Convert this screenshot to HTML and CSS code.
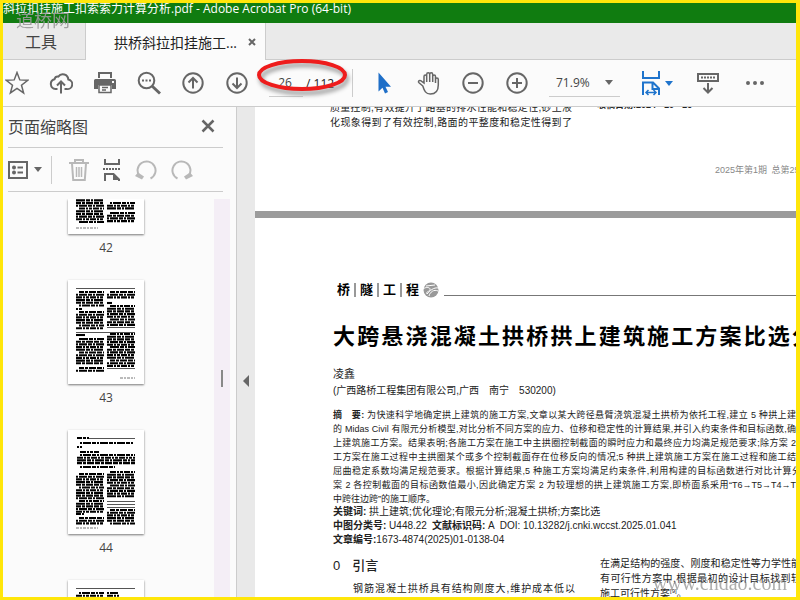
FILE: index.html
```html
<!DOCTYPE html>
<html lang="zh-CN">
<head>
    <meta charset="UTF-8">
    <meta name="viewport" content="width=device-width, initial-scale=1.0">
    <title>Adobe Acrobat Pro</title>
    <link rel="stylesheet" href="styles.css">
</head>
<body>
    <header class="titlebar">斜拉扣挂施工扣索索力计算分析.pdf - Adobe Acrobat Pro (64-bit)</header>
    <span class="stamp">道桥网</span>

    <nav class="tabs">
        <button class="tab tools">工具</button>
        <div class="tab active">
            <span>拱桥斜拉扣挂施工...</span>
            <button class="icon close" aria-label="关闭标签">
                <svg width="8" height="8" viewBox="0 0 8 8"><path d="M1 1l6 6M7 1L1 7" stroke-width="2"/></svg>
            </button>
        </div>
        <div class="tab-rest"></div>
    </nav>

    <div class="toolbar">
        <div class="group">
            <button class="icon" aria-label="收藏"><svg width="24" height="24" viewBox="0 0 24 24"><path d="M12 1.5l2.8 7.4 7.9.4-6.2 4.9 2.1 7.7-6.6-4.4-6.6 4.4 2.1-7.7L1.3 9.3l7.9-.4z"/></svg></button>
            <button class="icon" aria-label="上传"><svg width="24" height="24" viewBox="0 0 24 24"><path d="M8.500 18H6.500a5 5 0 0 1-1-9.800 3.500 3.500 0 0 1 3.800-2.600 5.500 5.500 0 0 1 10 2.900A4.800 4.800 0 0 1 17.500 18h-2M12 22.500V11M8 14.500l4-4 4 4" stroke-width="2"/></svg></button>
            <button class="icon" aria-label="打印"><svg width="24" height="24" viewBox="0 0 24 24"><path class="fill" d="M5 1h14v6H5zM2.500 8h19a1.500 1.500 0 0 1 1.500 1.500V18h-4v-4H5v4H1V9.500A1.500 1.500 0 0 1 2.500 8z"/><path class="paper" d="M7 3h10v4H7z"/><path d="M6 14h12v7.500H6zM9 16.500h6M9 19h4"/><path class="paper" d="M19 10h2v2h-2z"/></svg></button>
            <button class="icon" aria-label="查找"><svg width="24" height="24" viewBox="0 0 24 24"><circle cx="9.500" cy="9.500" r="7.800" stroke-width="2"/><path d="M15 15l8 7.500" stroke-width="3"/><path class="fill" d="M5 8.500h2v2H5zM8.500 8.500h2v2h-2zM12 8.500h2v2h-2z"/></svg></button>
            <button class="icon" aria-label="上一页"><svg width="24" height="24" viewBox="0 0 24 24"><circle cx="12" cy="12" r="9.700" stroke-width="2"/><path d="M12 17.500V8M7.500 11.500L12 7l4.500 4.500" stroke-width="2"/></svg></button>
            <button class="icon" aria-label="下一页"><svg width="24" height="24" viewBox="0 0 24 24"><circle cx="12" cy="12" r="9.700" stroke-width="2"/><path d="M12 6.500V16M7.500 12.500L12 17l4.500-4.500" stroke-width="2"/></svg></button>
        </div>
        <div class="pager">
            <input type="text" value="26" aria-label="页码">
            <span>/ 112</span>
            <svg class="mark" width="96" height="40" viewBox="0 0 96 40"><ellipse cx="47" cy="18" rx="43" ry="14" stroke-width="4"/></svg>
        </div>
        <div class="group view">
            <button class="icon" aria-label="选择"><svg width="24" height="24" viewBox="0 0 24 24"><path class="blue-fill" d="M5.500 1.500v19l4-3.700 2.500 5.700 3-1.400-2.500-5.300H18z"/></svg></button>
            <button class="icon" aria-label="手形工具"><svg width="24" height="24" viewBox="0 0 24 24"><path d="M5.800 15L2 11.800C.7 10.500 2 8.800 3.700 9.700L7 12V5.500c0-2 2.700-2 2.700 0V11 3.500c0-2.300 3-2.300 3 0V11 3.500c0-2.200 3-2.200 3 0V11 5.500c0-2 2.800-2 2.800 0V12 8.500c0-2 2.800-2 2.800 0V14c0 6-3 9-8 9-4.500 0-6-3-7.500-8z" stroke-width="1.500"/></svg></button>
            <button class="icon" aria-label="缩小"><svg width="24" height="24" viewBox="0 0 24 24"><circle cx="12" cy="12" r="9.700" stroke-width="2"/><path d="M7 12h10" stroke-width="2"/></svg></button>
            <button class="icon" aria-label="放大"><svg width="24" height="24" viewBox="0 0 24 24"><circle cx="12" cy="12" r="9.700" stroke-width="2"/><path d="M7 12h10M12 7v10" stroke-width="2"/></svg></button>
        </div>
        <button class="zoom"><span>71.9%</span><i class="caret"></i></button>
        <button class="icon fit" aria-label="适合宽度">
            <svg width="20" height="26" viewBox="0 0 20 26"><path class="blue" d="M2 1v7h16V1M2 25V12.500h10l6 6V25M11.500 12.500V19H18" stroke-width="2"/><path class="blue" d="M5 22.500h10M7.500 20L5 22.500 7.500 25M12.500 20l2.500 2.500-2.500 2.500"/></svg>
            <i class="caret blue-caret"></i>
        </button>
        <button class="icon keys" aria-label="隐藏工具栏"><svg width="24" height="24" viewBox="0 0 24 24"><path d="M2 3h20v7H2z" stroke-width="2"/><path d="M5 6.500h14" stroke-width="2" stroke-dasharray="2 1"/><path d="M12 12v9M7.500 17l4.500 4.500 4.500-4.500" stroke-width="2"/></svg></button>
        <button class="icon" aria-label="更多"><svg width="20" height="6" viewBox="0 0 20 6"><path class="fill" d="M1 3a2 2 0 1 0 4 0 2 2 0 1 0-4 0zM8 3a2 2 0 1 0 4 0 2 2 0 1 0-4 0zM15 3a2 2 0 1 0 4 0 2 2 0 1 0-4 0z"/></svg></button>
    </div>

    <main class="workspace">
        <aside class="sidebar">
            <div class="side-head">
                <h2>页面缩略图</h2>
                <button class="icon" aria-label="关闭"><svg width="14" height="14" viewBox="0 0 14 14"><path d="M1.500 1.500l11 11M12.500 1.500l-11 11" stroke-width="2.500"/></svg></button>
            </div>
            <div class="side-tools">
                <button class="icon options" aria-label="选项">
                    <svg width="20" height="18" viewBox="0 0 20 18"><path d="M1 1h18v16H1zM9.500 6.500H15M9.500 11.500H15" stroke-width="2"/><circle class="fill" cx="6" cy="6.500" r="2"/><circle class="fill" cx="6" cy="11.500" r="2"/></svg>
                    <i class="caret"></i>
                </button>
                <button class="icon off" aria-label="删除"><svg width="20" height="22" viewBox="0 0 20 22"><path d="M0 4h20M6 4V1h8v3M3 4.500L4.200 21h11.600L17 4.500" stroke-width="2"/><path d="M7.500 8v10M10 8v10M12.500 8v10"/></svg></button>
                <button class="icon" aria-label="拆分"><svg width="18" height="22" viewBox="0 0 18 22"><path d="M2 0v5h14V0M2 22v-7h8.500l5.500 5.500V22" stroke-width="2"/><path class="fill" d="M10 14l7 7h-7z"/><path d="M0 10h18" stroke-width="2" stroke-dasharray="2 1"/></svg></button>
                <button class="icon off" aria-label="逆时针旋转"><svg width="22" height="22" viewBox="0 0 22 22"><path d="M4.500 17A9 9 0 1 1 15.500 19.500" stroke-width="2"/><path class="fill" d="M0 17l3-3.500 6 4-2 3z"/></svg></button>
                <button class="icon off" aria-label="顺时针旋转"><svg width="22" height="22" viewBox="0 0 22 22"><path d="M17.500 17A9 9 0 1 0 6.500 19.500" stroke-width="2"/><path class="fill" d="M22 17l-3-3.500-6 4 2 3z"/></svg></button>
            </div>
            <div class="side-body">
                <div class="thumbs">
                    <figure><svg class="thumb cut" data-page="42" viewBox="0 69 76 35"></svg><figcaption>42</figcaption></figure>
                    <figure><svg class="thumb" data-page="43" viewBox="0 0 76 104"></svg><figcaption>43</figcaption></figure>
                    <figure><svg class="thumb" data-page="44" viewBox="0 0 76 104"></svg><figcaption>44</figcaption></figure>
                    <figure><svg class="thumb" data-page="45" viewBox="0 0 76 104"></svg></figure>
                </div>
                <div class="track"><i class="grip"></i></div>
            </div>
        </aside>
        <button class="rail" aria-label="折叠面板"><i class="fold"></i></button>

        <article class="document">
            <section class="page previous">
                <div class="columns">
                    <div class="col">
                        <p class="line">质量控制,有效提升了路基的排水性能和稳定性,砂土液</p>
                        <p class="line">化现象得到了有效控制,路面的平整度和稳定性得到了</p>
                    </div>
                    <p class="received">收稿日期:2024 - 10 - 16</p>
                </div>
                <p class="issue">2025年第1期&ensp;总第250期</p>
            </section>

            <section class="page">
                <div class="section-name">
                    <b>桥</b><b>隧</b><b>工</b><b>程</b>
                    <svg width="16" height="16" viewBox="0 0 16 16"><circle cx="8" cy="8" r="7.500" fill="#999"/><path d="M0 7c4-3 8-1 7 1s-4 1-3 4c3-3 6-7 12-6M6 14c1-4 5-7 9-5M3 4l9-1" fill="none" stroke="#fff"/></svg>
                    <hr>
                </div>
                <h1 class="line">大跨悬浇混凝土拱桥拱上建筑施工方案比选分</h1>
                <p class="author">凌鑫</p>
                <p class="org">(广西路桥工程集团有限公司,广西&emsp;南宁&emsp;530200)</p>
                <div class="abstract">
                    <p class="line"><b>摘&emsp;要:</b> 为快速科学地确定拱上建筑的施工方案,文章以某大跨径悬臂浇筑混凝土拱桥为依托工程,建立 5 种拱上建</p>
                    <p class="line">的 Midas Civil 有限元分析模型,对比分析不同方案的应力、位移和稳定性的计算结果,并引入约束条件和目标函数,确</p>
                    <p class="line">上建筑施工方案。结果表明;各施工方案在施工中主拱圈控制截面的瞬时应力和最终应力均满足规范要求;除方案 2</p>
                    <p class="line">工方案在施工过程中主拱圈某个或多个控制截面存在位移反向的情况;5 种拱上建筑施工方案在施工过程和施工结</p>
                    <p class="line over">屈曲稳定系数均满足规范要求。根据计算结果,5 种施工方案均满足约束条件,利用构建的目标函数进行对比计算分</p>
                    <p class="line over">案 2 各控制截面的目标函数值最小,因此确定方案 2 为较理想的拱上建筑施工方案,即桥面系采用“T6→T5→T4→T3</p>
                    <p>中跨往边跨”的施工顺序。</p>
                </div>
                <div class="meta">
                    <p><b>关键词:</b> 拱上建筑;优化理论;有限元分析;混凝土拱桥;方案比选</p>
                    <p><b>中图分类号:</b> U448.22&ensp;<b>文献标识码:</b> A&ensp;DOI: 10.13282/j.cnki.wccst.2025.01.041</p>
                    <p><b>文章编号:</b>1673-4874(2025)01-0138-04</p>
                </div>
                <div class="columns">
                    <div class="col">
                        <h3><span>0</span>引言</h3>
                        <p class="line first">钢筋混凝土拱桥具有结构刚度大,维护成本低以</p>
                        <p class="line">及施工工艺成熟等优点,在我国西南山区桥梁建设中</p>
                    </div>
                    <div class="col right">
                        <p class="line over">在满足结构的强度、刚度和稳定性等力学性能</p>
                        <p class="line over">有可行性方案中,根据最初的设计目标找到较</p>
                        <p>施工可行性方案<sup>[9]</sup>。</p>
                    </div>
                </div>
            </section>
        </article>
    </main>
    <span class="site">www.cndao.com</span>
    <script src="thumbs.js"></script>
</body>
</html>
```
FILE: styles.css
```css
* {
    box-sizing: border-box;
}

body {
    margin: 0;
    height: 100vh;
    display: flex;
    flex-direction: column;
    position: relative;
    overflow: hidden;
    border: 3px solid #ffe60a;
    border-right-width: 4px;
    background: #fbfbfb;
    color: #222;
    font-family: "Open Sans", "Noto Sans CJK SC", sans-serif;
}

h1, h2, h3, p, figure {
    margin: 0;
}

button {
    padding: 0;
    border: 0;
    background: none;
    color: inherit;
    font: inherit;
}

/* Iconos */
.icon {
    display: flex;
    align-items: center;
    justify-content: center;
    flex: none;
}

.icon svg {
    display: block;
    fill: none;
    stroke: #666;
    stroke-width: 1.5;
}

.icon .fill {
    fill: #666;
    stroke: none;
}

.icon .paper {
    fill: #fbfbfb;
    stroke: none;
}

.icon .blue {
    stroke: #1f74cc;
}

.icon .blue-fill {
    fill: #1f6fc8;
    stroke: none;
}

.icon.off svg {
    stroke: #b8b8b8;
}

.icon.off .fill {
    fill: #b8b8b8;
}

.caret {
    border: 4px solid transparent;
    border-top: 5px solid #666;
    border-bottom: 0;
}

.blue-caret {
    border-top-color: #1f74cc;
}

/* Barra de título y pestañas */
.titlebar {
    flex: none;
    height: 20px;
    background: #107c10;
    color: #fff;
    font-size: 12px;
    line-height: 12px;
    white-space: nowrap;
    overflow: hidden;
}

.stamp {
    position: absolute;
    left: 13px;
    top: 7px;
    color: #9a9a9a;
    font: 18px/22px "Liberation Serif", "Noto Sans CJK SC", serif;
    opacity: 0.9;
}

.tabs {
    flex: none;
    display: flex;
    height: 37px;
    font-size: 14px;
}

.tools {
    width: 83px;
    padding-right: 6px;
    border-right: 1px solid #ccc;
    border-bottom: 1px solid #ccc;
    background: #eaeaea;
    color: #444;
    font-size: 16px;
}

.active {
    display: flex;
    align-items: center;
    justify-content: space-between;
    width: 179px;
    padding: 0 9px 0 28px;
}

.tab-rest {
    flex: 1;
    border-left: 1px solid #ccc;
    border-bottom: 1px solid #ccc;
    background: #eaeaea;
}

/* Barra de herramientas */
.toolbar {
    flex: none;
    display: flex;
    align-items: center;
    height: 47px;
    padding-left: 2px;
    border-bottom: 1px solid #ccc;
}

.group {
    display: flex;
    gap: 20px;
}

.pager {
    position: relative;
    display: flex;
    align-items: center;
    gap: 3px;
    width: 104px;
    height: 28px;
    padding-left: 20px;
    border-right: 1px solid #ccc;
    font-size: 12px;
}

.pager input {
    width: 34px;
    height: 28px;
    padding: 0 2px 0 0;
    border: 0;
    border-bottom: 1px solid #ccc;
    background: none;
    color: #444;
    font: inherit;
    text-align: center;
}

.mark {
    position: absolute;
    left: 6px;
    top: -12px;
    fill: none;
    stroke: #ee1c1c;
    filter: drop-shadow(2px 4px 2px #999);
}

.view {
    margin-left: 20px;
}

.zoom {
    display: flex;
    align-items: center;
    justify-content: space-between;
    width: 71px;
    height: 28px;
    margin-left: 20px;
    padding: 0 7px;
    border-bottom: 1px solid #ccc;
    color: #444;
    font-size: 12px;
}

.fit {
    gap: 4px;
    margin-left: 21px;
}

.keys {
    margin: 0 25px 0 23px;
}

/* Panel lateral */
.workspace {
    flex: 1;
    display: flex;
    min-height: 0;
}

.sidebar {
    flex: none;
    display: flex;
    flex-direction: column;
    width: 234px;
    padding-left: 5px;
    border-right: 1px solid #ccc;
}

.side-head, .side-tools {
    flex: none;
    display: flex;
    align-items: center;
    margin-right: 13px;
    border-bottom: 1px solid #ccc;
}

.side-head {
    justify-content: space-between;
    height: 41px;
    padding: 0 8px 2px 0;
}

.side-head h2 {
    color: #444;
    font-size: 16px;
    font-weight: normal;
}

.side-tools {
    gap: 14px;
    height: 44px;
}

.options {
    gap: 6px;
    height: 28px;
    padding-right: 9px;
    margin-right: 3px;
    border-right: 1px solid #ccc;
}

.side-body {
    flex: 1;
    display: flex;
    min-height: 0;
    margin-top: 7px;
}

.thumbs {
    flex: 1;
    overflow: hidden;
}

.thumbs figure {
    display: flex;
    flex-direction: column;
    align-items: center;
    padding-right: 10px;
}

.thumb {
    display: block;
    flex: none;
    width: 76px;
    height: 104px;
    background: #fff;
    box-shadow: 0 1px 2px #777;
}

.cut {
    height: 35px;
}

.thumbs figcaption {
    height: 46px;
    padding-top: 5px;
    color: #444;
    font-size: 12px;
    line-height: 18px;
}

.track {
    width: 16px;
    margin-right: 6px;
    padding: 171px 7px 0;
    background: #f4eef6;
}

.grip {
    display: block;
    width: 2px;
    height: 17px;
    background: #888;
}

.rail {
    flex: none;
    display: flex;
    align-items: center;
    justify-content: center;
    width: 18px;
    padding-top: 58px;
    background: #e9e9e9;
}

.fold {
    border: 6px solid transparent;
    border-right: 6px solid #666;
    border-left: 0;
}

/* Documento */
.document {
    flex: 1;
    min-width: 0;
    overflow: hidden;
    background: #fff;
    color: #222;
    font-family: "Liberation Sans", "Noto Sans CJK SC", sans-serif;
    font-size: 9px;
    line-height: 14px;
    white-space: nowrap;
}

.page {
    padding-left: 78px;
}

.line {
    text-align: justify;
    text-align-last: justify;
}

.over {
    margin-right: -5px;
}

.previous {
    display: flow-root;
    height: 111px;
    padding-left: 75px;
    border-bottom: 7px solid #9b9b9b;
}

.columns {
    display: flex;
    gap: 25px;
    font-size: 10px;
    line-height: 15px;
}

.previous .columns {
    margin-top: -7px;
}

.col {
    flex: none;
    width: 242px;
}

.received {
    margin-top: -2px;
    font-size: 9px;
    font-weight: bold;
}

.issue {
    margin-top: 33px;
    margin-left: 385px;
    color: #888;
}

.section-name {
    display: flex;
    align-items: center;
    height: 16px;
    margin-top: 64px;
}

.section-name b {
    width: 23px;
    border-right: 2px solid #999;
    color: #000;
    font-size: 13px;
    text-align: center;
}

.section-name b:nth-of-type(4) {
    width: 21px;
    border: 0;
}

.section-name hr {
    flex: 1;
    height: 1px;
    margin: 11px 0 0 5px;
    border: 0;
    background: #777;
}

h1 {
    margin-top: 22px;
    margin-right: -18px;
    color: #000;
    font-size: 22px;
    line-height: 34px;
}

h1.line {
    margin-right: -18px;
}

.author {
    margin-top: 13px;
    font-size: 11px;
}

.org {
    margin-top: 3px;
    font-size: 10px;
}

.abstract {
    margin-top: 10px;
}

.meta {
    margin-top: -1px;
    font-size: 10px;
}

.page:last-child .columns {
    margin-top: 9px;
}

h3 {
    display: flex;
    gap: 12px;
    height: 25px;
    font-size: 13px;
    font-weight: 500;
    line-height: 20px;
}

h3 span {
    font-weight: normal;
}

.first {
    padding-left: 20px;
}

.right {
    flex: 1;
    min-width: 0;
}

sup {
    font-size: 6px;
    line-height: 0;
}

.site {
    position: absolute;
    right: 9px;
    bottom: 2px;
    color: #777;
    font: 20px/24px "Liberation Serif", serif;
    opacity: 0.6;
}
```
FILE: thumbs.js
```js
// bloques de texto: [x, y inicial, ancho, y final]
const pages = {
    42: { text: [[8, 65, 28, 93], [39, 65, 28, 68], [39, 73, 28, 80], [39, 83, 28, 93]], rules: [], foot: [8, 22] },
    43: {
        text: [[8, 12, 28, 27], [8, 29, 6, 30], [8, 32, 28, 50], [8, 55, 9, 56], [8, 59, 28, 85], [8, 88, 28, 92],
            [39, 12, 28, 20], [39, 23, 5, 24], [39, 26, 28, 45], [39, 54, 28, 65], [39, 67, 28, 86]],
        rules: [[8, 8, 59], [39, 47, 28], [8, 52, 59], [39, 88, 28]],
        foot: [52, 15]
    },
    44: {
        text: [[9, 8, 12, 9], [9, 13, 56, 14], [9, 17, 5, 18], [9, 22, 22, 23], [9, 25, 58, 35], [9, 37, 38, 39],
            [8, 44, 28, 82], [8, 84, 8, 85], [8, 88, 28, 94], [39, 42, 28, 67], [39, 80, 28, 94]],
        rules: [[21, 8, 46], [39, 71, 28], [39, 74, 28], [39, 77, 28]],
        foot: [8, 22]
    },
    45: { text: [[8, 13, 28, 40], [39, 13, 12, 17], [39, 20, 28, 40]], rules: [[8, 8, 59]], foot: [52, 15] }
};

const dashes = ['5 1 3 1 7 1', '2 1 8 1 4 1', '6 1 2 1 3 1', '9 1 4 1 2 1'];

function line(x, y, w, width, dash, color) {
    return `<path d="M${x} ${y}h${w}" stroke="${color}" stroke-width="${width}" stroke-dasharray="${dash}"/>`;
}

document.querySelectorAll('.thumb').forEach(function(svg) {
    const page = pages[svg.dataset.page];
    let out = '';
    page.text.forEach(function([x, top, w, bottom]) {
        let i = 0;
        for (let y = top; y <= bottom; y += 2.7) {
            const indent = i % 5 === 0 && w > 20 ? 3 : 0;
            out += line(x + indent, y, w - indent, 2.1, dashes[(i + top) % 4], '#000');
            i++;
        }
    });
    page.rules.forEach(([x, y, w]) => out += line(x, y + 0.5, w, 1, 'none', '#555'));
    out += line(page.foot[0], 98, page.foot[1], 1, '3 1 2 1', '#777');
    svg.innerHTML = out;
});
```
